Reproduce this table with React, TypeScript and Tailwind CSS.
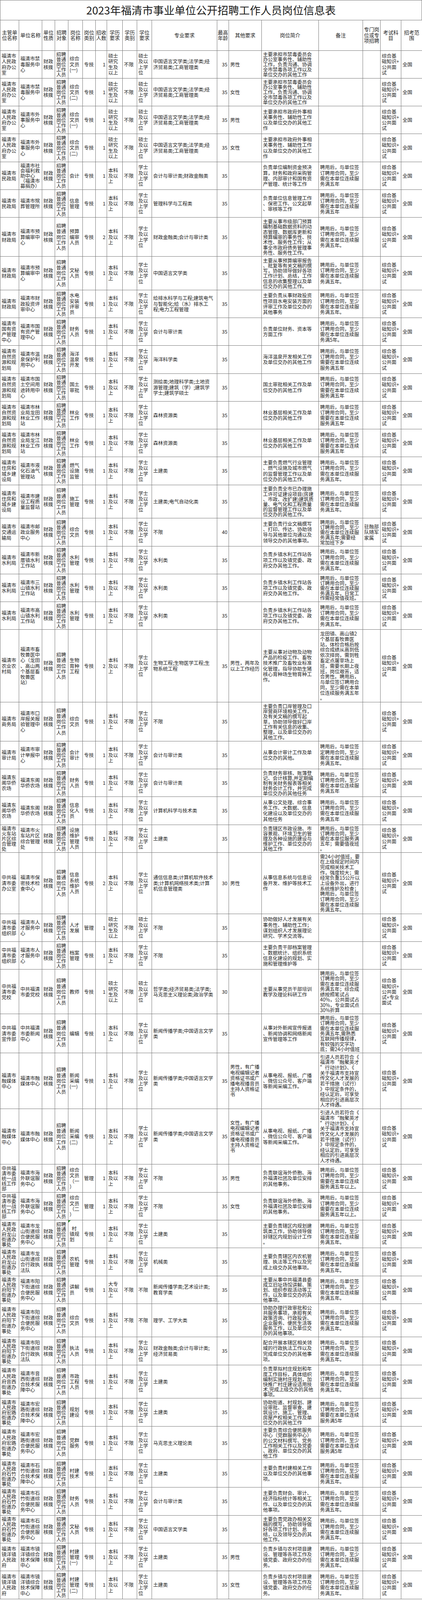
import React from "react";

type Row = {
  a: string; b: string; p: string; t?: string; n?: string; e?: string; d?: string;
  m: string; age?: string; o?: string; j: string; r?: string; s?: string; ex?: string;
  h?: number; flag?: boolean;
};

// column widths, left to right
const COLS = [
  "w-[48px]", "w-[59px]", "w-[33px]", "w-[34px]", "w-[37px]", "w-[33px]", "w-[29px]", "w-[40px]", "w-[37px]",
  "w-[38px]", "w-[167px]", "w-[30px]", "w-[84px]", "w-[146px]", "w-[113px]", "w-[45px]", "w-[53px]", "w-[54px]",
];

const T5 = "招聘\n普通\n岗位\n工作\n人员";
const BK = "本科\n及以\n上";
const SS = "硕士\n研究\n生及\n以上";
const XS = "学士\n及以\n上学\n位";
const SD = "硕士\n及以\n上学\n位";
const EX = "综合基\n础知识+\n公共面\n试";
const R5 = "聘用后，与单位签\n订聘用合同，至少\n需在本单位连续服\n务满五年。";
const R5b = "聘用后，与单位签\n订聘用合同，至少\n需在本单位连续服\n务满五年";
const RN = "聘用后，与单位签\n订聘用合同，至少\n需要在本单位连续\n服务满五年";
const R5y = "聘用后，与单位签\n订聘用合同，至少\n需要在本单位连续\n服务满5年";

const ZF = "福清市\n人民政\n府办公\n室";
const MZ = "福清市\n民政局";
const CZ = "福清市\n财政局";
const ZR = "福清市\n自然资\n源和规\n划局";
const ZJ = "福清市\n住房和\n城乡建\n设局";
const SL = "福清市\n水利局";
const DG = "福清东\n阁华侨\n农场";
const ZZ = "中共福\n清市委\n组织部";
const RM = "福清市\n融媒体\n中心";
const TZ = "中共福\n清市委\n统一战\n线工作\n部";
const LS = "福清市\n人民政\n府龙山\n街道办\n事处";
const YX = "福清市\n人民政\n府阳下\n街道办\n事处";
const HL = "福清市\n人民政\n府宏路\n街道办\n事处";
const SZ = "福清市\n人民政\n府石竹\n街道办\n事处";
const JY = "福清市\n镜洋镇\n人民政\n府";

const JD = "主要承担市禁毒委员会\n办公室事务性、辅助性\n工作，负责沟通、协调\n全市禁毒各项工作以及\n单位交办的其他工作";
const JW = "主要承担市政府外事相\n关事务性、辅助性工作\n以及单位交办的其他工\n作";
const M1 = "中国语言文学类;法学类;经\n济贸易类;工商管理类";
const XW = "新闻传播学类;中国语言文学\n类";
const RMR = "引进人员若符合《\n福清市“融聚英才\n”行动计划》、《\n关于福清市支持宣\n传文化人才发展的\n若干措施（试行）\n》中规定条件的，\n经认定后，可享受\n相应的引进高层次\n人才待遇。";
const TZJ = "负责联谊海外侨胞、海\n外福清社团及单位安排\n的其他事务。";
const TZR = "聘用后，与单位签\n订聘用合同，至少\n需要在本单位连续\n服务满五年以上。";
const SLJ = "负责乡镇水利工作站各\n项工作以及镇党委、政\n府交办其他工作。";
const JYJ = "负责乡镇与农村项目建\n设、管理等各项工作及\n镇党委、政府交办的任\n务。";

const rows: Row[] = [
  { a: ZF, b: "福清市禁\n毒服务中\n心", p: "综合\n文员\n(一)", e: SS, d: SD, m: M1, o: "男性", j: JD },
  { a: ZF, b: "福清市禁\n毒服务中\n心", p: "综合\n文员\n(二)", e: SS, d: SD, m: M1, o: "女性", j: JD },
  { a: ZF, b: "福清市外\n事服务中\n心", p: "综合\n文员\n(一)", e: SS, d: SD, m: M1, o: "男性", j: JW },
  { a: ZF, b: "福清市外\n事服务中\n心", p: "综合\n文员\n(二)", e: SS, d: SD, m: M1, o: "女性", j: JW },
  { a: MZ, b: "福清市社\n会福利救\n助中心\n（福清市\n募捐办）", p: "会计", m: "会计与审计类;财政金融类", j: "负责单位编制资金预决\n算，财务和政府采购管\n理、内部审计和国有资\n产管理、统计等工作", r: R5b },
  { a: MZ, b: "福清市殡\n葬管理所", p: "信息\n管理", m: "管理科学与工程类", j: "负责单位信息管理工作\n、保密工作、公文起草\n、审核等工作", r: R5b },
  { a: CZ, b: "福清市预\n算编审中\n心", p: "预算\n编审\n人员", n: "2", m: "财政金融类;会计与审计类", j: "主要从事市级部门预算\n编制基础数据资料的动\n态管理、数据库更新和\n预算编审的事务性、技\n术性、服务性工作；从\n事全市政府债务管理事\n务性、服务性工作。", r: R5, h: 7 },
  { a: CZ, b: "福清市预\n算编审中\n心", p: "文秘\n人员", m: "中国语言文学类", j: "主要从事预算编审报告\n、批复等有关文稿的撰\n写，协助领导做好各项\n工作计划、总结，工作\n信息的收集整理以及单\n位交办的其他工作。", r: R5, h: 6 },
  { a: CZ, b: "福清市财\n政投资评\n审中心", p: "水电\n安装\n评审\n员", m: "给排水科学与工程;建筑电气\n与智能化;给（水）排水工\n程;电力工程管理", j: "主要负责从事财政投资\n性项目水电安装方面的\n评审工作及单位交办的\n其他事务", r: R5 },
  { a: "福清市\n国有资\n产管理\n中心", b: "福清市国\n有资产管\n理中心", p: "财务\n人员", m: "会计与审计类", j: "负责单位财务、资本等\n方面工作", r: "聘用后，与单位签\n订聘用合同，至少\n需在本单位连续服\n务满5年。" },
  { a: ZR, b: "福清市温\n泉保护利\n用中心", p: "海洋\n温泉\n开发", m: "海洋科学类", j: "海洋温泉开发相关工作\n及单位交办的其他工作", r: RN },
  { a: ZR, b: "福清市国\n土空间用\n途转用中\n心", p: "国土\n审批", m: "测绘类;地理科学类;土地资\n源管理;建筑（学）;建筑学\n学士;建筑学硕士", j: "国土审批相关工作及单\n位交办的其他工作", r: RN },
  { a: ZR, b: "福清市林\n业局龙田\n林业工作\n站", p: "林业\n工作", m: "森林资源类", j: "林业基层相关工作及单\n位交办的其他工作", r: RN },
  { a: ZR, b: "福清市林\n业局龙江\n林业工作\n站", p: "林业\n工作", m: "森林资源类", j: "林业基层相关工作及单\n位交办的其他工作", r: RN },
  { a: ZJ, b: "福清市液\n化石油气\n管理站", p: "燃气\n设施\n监管", m: "土建类", j: "主要负责燃气行业管理\n、燃气设施及城市燃气\n的监督管理工作以及单\n位交办的其他工作。", r: R5 },
  { a: ZJ, b: "福清市建\n设工程质\n量监督站", p: "施工\n管理", m: "土建类;电气自动化类", j: "主要负责全市已办理施\n工许可证建设项目(房建\n、市政、改扩建)建筑质\n量、电气化和工程质量\n的监督管理工作以及单\n位交办的其他工作。", r: R5, h: 6 },
  { a: "福清市\n交通运\n输局", b: "福清市邮\n政业服务\n中心", p: "综合\n文员", m: "不限", age: "40", j: "主要负责行业文稿撰写\n、打印、传达、协助领\n导与其他单位沟通以及\n领导交办的其他事项。", r: "聘用后，与单位签\n订聘用合同，至少\n需在本单位连续服\n务满五年;需要经\n常加班下乡", s: "驻融部\n队随军\n家属" },
  { a: SL, b: "福清市新\n厝镇水利\n工作站", p: "水利\n管理", m: "水利类", j: SLJ, r: R5 },
  { a: SL, b: "福清市三\n山镇水利\n工作站", p: "水利\n管理", m: "水利类", j: SLJ, r: "聘用后，与单位签\n订聘用合同，至少\n需在本单位连续服\n务满五年，日常工\n作需经常值夜班。" },
  { a: SL, b: "福清市高\n山镇水利\n工作站", p: "水利\n管理", m: "水利类", j: SLJ, r: R5 },
  { a: "福清市\n农业农\n村局", b: "福清市畜\n牧兽医中\n心（龙田\n、高山两\n个基层畜\n牧兽医\n站）", p: "生物\n育种\n工程", n: "2", m: "生物工程;生物医学工程;生\n物系统工程", o: "男性，两年及\n以上工作经历", j: "主要从事对动物及动物\n产品的检疫工作、畜牧\n技术推广及畜牧业标准\n化管理，指导协助生猪\n核心育种场生物育种工\n作。", r: "龙田镇、高山镇2\n个基层畜牧兽医\n站，体检合格后按\n综合成绩从高到低\n依次择岗，需到牲\n畜定点屠宰场上\n班，需要长期上夜\n班，岗位艰苦，适\n合男性。聘用后，\n与单位签订聘用合\n同，至少需在本单\n位连续服务满五年\n。", h: 13 },
  { a: "福清市\n商务局", b: "福清市口\n岸报关报\n验管理中\n心", p: "综合\n文员", m: "不限", j: "主要负责口岸管理及口\n岸营商环境相关工作，\n及有关文稿的撰写起\n草，协助领导做好口岸\n工作有关信息的收集、\n整理，以及单位交办的\n其他工作。", h: 7 },
  { a: "福清市\n审计局", b: "福清市审\n计举报中\n心", p: "会计\n审计", m: "会计与审计类", j: "从事会计审计工作及单\n位交办的其他。", r: "聘用后，与单位签\n定聘用合同，至少\n需在本单位连续服\n务满五年。" },
  { a: DG, b: "福清东阁\n华侨农场", p: "财务\n人员", m: "会计与审计类", j: "负责财务审核、账簿登\n记、会计核算,并定期编\n制有关财务报表等相关\n财务会计工作，并完成\n单位交办的其他任务", r: R5b },
  { a: DG, b: "福清东阁\n华侨农场", p: "信息\n化人\n员", m: "计算机科学与技术类", j: "从事公文处理、综合事\n务工作、大数据、信息\n化建设以及单位交办的\n其他任务", r: R5b },
  { a: "福清市\n火车站\n片区综\n合管理\n处", b: "福清市火\n车站片区\n综合管理\n处", p: "设施\n维护\n管理\n人员", m: "土建类", j: "负责辖区市政设施、市\n容景观、环境卫生的管\n理及各种设施的建设与\n维护工作、单位交办的\n其他工作", r: "聘用后，与单位签\n订聘用合同，至少\n需在本单位服务满\n五年；需要值夜班\n。" },
  { a: "中共福\n清市委\n办公室", b: "福清市保\n密技术检\n查中心", p: "信息\n系统\n维护\n人员", n: "2", m: "通信信息类;计算机软件技术\n类;计算机网络技术类;计算\n机信息管理类", age: "30", o: "男性", j: "从事信息系统与信息设\n备开发、维护等技术工\n作", r: "需24小时值班，要\n在上级规定时间内\n完成相关技术工\n作，强度较大；需\n经常负重15公斤以\n上设备外出，进行\n系统维护及检查；\n聘用后，与单位签\n订聘用合同，至少\n需在本单位连续服\n务满五年。", h: 11 },
  { a: ZZ, b: "福清市人\n才服务中\n心", p: "人才\n发展", t: "管理", e: SS, d: SD, m: "不限", j: "协助做好人才发展有关\n事务性、辅助性工作；\n谋划组织人才发展理论\n研究、学术交流等。" },
  { a: ZZ, b: "福清市人\n才服务中\n心", p: "档案\n管理", m: "不限", j: "主要负责干部档案管理\n、数据统计、组织系统\n信息化建设的规划、实\n施和管理维护等" },
  { a: "中共福\n清市委\n党校", b: "中共福清\n市委党校", p: "教师", e: SS, d: SD, m: "哲学类;经济贸易类;法学类;\n马克思主义理论类;政治学类", age: "30", j: "主要从事党员干部培训\n教学及理论科研工作", r: "聘用后，与单位签\n订聘用合同，至少\n需在本单位连续服\n务满五年；综合成\n绩按照笔试占\n40%，公共面试占\n30%，专业面试点\n30%折算", ex: "综合基\n础知识+\n公共面\n试+专业\n面试", h: 8 },
  { a: "中共福\n清市委\n宣传部", b: "中共福清\n市委新闻\n中心", p: "编辑", m: XW, j: "从事对外新闻宣传报道\n、新闻协调和网络新闻\n宣传管理等工作", r: "聘用后，与单位签\n订聘用合同，至少\n需在本单位连续服\n务满五年,需熟悉\n互联网传播规律，\n有较强的文字功\n底；需24小时值班", h: 7 },
  { a: RM, b: "福清市融\n媒体中心", p: "新闻\n采编\n(一)", m: XW, o: "男性，有广播\n电视编辑记者\n资格证书或广\n播电视播音员\n主持人资格证\n书", j: "从事电视、报纸、广播\n、微信公众号、客户端\n等新闻采编工作。", r: RMR, h: 10 },
  { a: RM, b: "福清市融\n媒体中心", p: "新闻\n采编\n(二)", m: XW, o: "女性，有广播\n电视编辑记者\n资格证书或广\n播电视播音员\n主持人资格证\n书", j: "从事电视、报纸、广播\n、微信公众号、客户端\n等新闻采编工作。", r: RMR, h: 10 },
  { a: TZ, b: "福清市海\n外联谊服\n务中心", p: "综合\n文员\n（一\n）", t: "管理", m: "不限", o: "男性", j: TZJ, r: TZR },
  { a: TZ, b: "福清市海\n外联谊服\n务中心", p: "综合\n文员\n（二\n）", t: "管理", m: "不限", o: "女性", j: TZJ, r: TZR },
  { a: LS, b: "福清市龙\n山街道综\n合便民服\n务中心", p: "  村\n镇规\n划", m: "土建类", j: "主要负责辖区内规划建\n筑类工作，协助领导做\n好辖区内规划设计工作\n。", r: R5, flag: true },
  { a: LS, b: "福清市龙\n山街道综\n合行政执\n法队", p: "农机\n管理", m: "机械类", j: "主要负责辖区内农机管\n理、执法等工作以及完\n成上级交办其他事项。", r: R5 },
  { a: YX, b: "福清市阳\n下街道综\n合便民服\n务中心", p: "讲解\n员", e: "大专\n及以\n上", d: "不限", m: "新闻传播学类;艺术设计类;\n教育学类", j: "主要从事中共福清县委\n成立旧址场馆讲解、策\n划、组织参观活动等工\n作，以及单位交办的其\n他事项。", r: R5 },
  { a: YX, b: "福清市阳\n下街道综\n合便民服\n务中心", p: "综合\n文员", d: "不限", m: "理学、工学大类", j: "协助办理行政审批和公\n共服务事项，承担有关\n政策咨询、行政投诉、\n企业服务、便民生活等\n服务工作，以及单位交\n办的其他事项。", r: R5, h: 6 },
  { a: YX, b: "福清市阳\n下街道综\n合行政执\n法队", p: "执法\n人员", m: "财政金融类;会计与审计类;\n经济贸易类", j: "配合开展本辖区相关领\n域的行政执法工作以及\n完成单位交办的其他事\n项。", r: R5 },
  { a: "福清市\n人民政\n府音西\n街道办\n事处", b: "福清市音\n西街道综\n合技术保\n障中心", p: "市政\n工程\n人员", m: "土建类", j: "负责草拟村庄规划和年\n度工作目标，具体组织\n编制实施村庄规划，加\n快推广村庄建设适用技\n术,完成上级交办的其他\n事项。", r: R5, h: 6 },
  { a: HL, b: "福清市宏\n路街道综\n合技术保\n障中心", p: "规划\n建设", m: "土建类", j: "协助街道、村规划、建\n设审批、监督审查、建\n筑设计、施工、管理、\n房屋产权相关工作及单\n位交办的其他工作", r: R5y },
  { a: HL, b: "福清市宏\n路街道综\n合便民服\n务中心", p: "党群\n服务", m: "马克思主义理论类", j: "主要负责综合便民服务\n中心（党群服务中心）\n的公文材料撰写、党务\n工作相关工作以及党委\n、政府、单位交办的其\n他工作", r: R5y, h: 6 },
  { a: SZ, b: "福清市石\n竹街道综\n合技术保\n障中心", p: "村建\n技术", m: "土建类", j: "主要负责村建相关工作\n以及单位交办的其他事\n项。", r: R5 },
  { a: SZ, b: "福清市石\n竹街道综\n合便民服\n务中心", p: "财务\n人员", m: "会计与审计类", j: "主要负责财会、审计、\n经济指标统计等相关工\n作、以及单位交办的其\n他事项。", r: R5 },
  { a: SZ, b: "福清市石\n竹街道综\n合便民服\n务中心", p: "文秘\n人员", m: "中国语言文学类", j: "主要负责党政办相关文\n稿的撰写，协助领导做\n好各项工作计划、总\n结，以及领导交办的其\n他工作。", r: R5 },
  { a: JY, b: "福清市镜\n洋镇综合\n技术保障\n中心", p: "村建\n管理\n(一)", m: "土建类", o: "男性", j: JYJ, r: R5 },
  { a: JY, b: "福清市镜\n洋镇综合\n技术保障\n中心", p: "村建\n管理\n(二)", m: "土建类", o: "女性", j: JYJ, r: R5 },
];

const HEAD = [
  "主管单\n位名称", "单位名称", "单位\n性质", "招聘\n对象", "岗位\n名称", "岗位\n类别", "招收\n人数",
  "学历\n要求", "学历\n类别", "学位\n要求", "专业要求", "最高\n年龄", "其他要求", "岗位简介",
  "备注", "专门岗\n位或专\n项招聘", "考试科\n目", "招考范\n围",
];

// one text line of the sheet; the window only shows 4096px, so the sheet is kept to that height
const LINE = 14.26;

function Cell({ w, text, rowH, right, flag }: { w: string; text: string; rowH: number; right?: boolean; flag?: boolean }) {
  const lines = text ? text.split("\n").length : 1;
  const lh = Math.min(14.2, (rowH - 6.4) / lines);
  return (
    <div
      className={
        w +
        " relative flex h-full shrink-0 items-center overflow-hidden whitespace-pre border-r border-[#767676] px-[3px] " +
        (right ? "justify-end" : "justify-start")
      }
    >
      {flag && (
        <span className="absolute left-0 top-0 h-0 w-0 border-t-[6px] border-r-[6px] border-t-[#2f8f2f] border-r-transparent" />
      )}
      <span style={{ lineHeight: `${lh}px` }}>{text}</span>
    </div>
  );
}

export default function App() {
  return (
    <div className="w-[1080px] overflow-hidden bg-white font-['Noto_Sans_CJK_SC',sans-serif] text-[#1c1c1c]">
      <div className="flex h-[51.5px] items-center justify-center border border-[#767676] text-[27.5px] leading-none">
        2023年福清市事业单位公开招聘工作人员岗位信息表
      </div>
      <div className="flex h-[78px] overflow-hidden border-b border-l border-[#767676] text-[13px]">
        {HEAD.map((h, i) => (
          <div
            key={i}
            className={
              COLS[i] +
              " flex h-full shrink-0 items-center justify-center overflow-hidden whitespace-pre border-r border-[#767676] text-center leading-[14.4px]"
            }
          >
            {h}
          </div>
        ))}
      </div>
      {rows.map((r, i) => {
        const cells = [
          r.a, r.b, "财政\n核拨", T5, r.p, r.t ?? "专技", r.n ?? "1", r.e ?? BK, "不限",
          r.d ?? XS, r.m, r.age ?? "35", r.o ?? "", r.j, r.r ?? "", r.s ?? "", r.ex ?? EX, "全国",
        ];
        const hh = (r.h ?? 5) * LINE;
        return (
          <div
            key={i}
            className="flex overflow-hidden border-b border-l border-[#767676] text-[12.5px]"
            style={{ height: hh, minHeight: hh, maxHeight: hh }}
          >
            {cells.map((c, k) => (
              <Cell key={k} w={COLS[k]} text={c} rowH={hh} right={k === 6 || k === 11} flag={r.flag && k === 4} />
            ))}
          </div>
        );
      })}
    </div>
  );
}
